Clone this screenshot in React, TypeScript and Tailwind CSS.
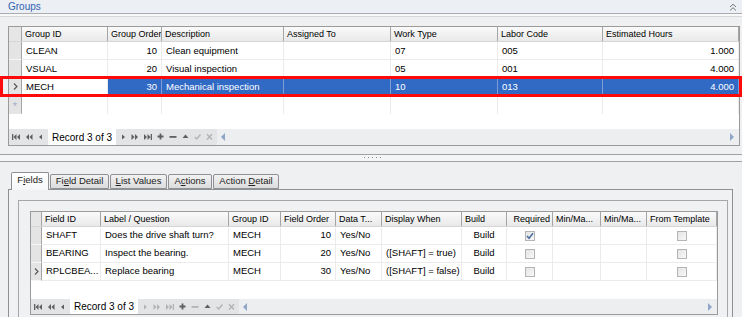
import React from "react";

type Col = { label: string; w: string; align?: "left" | "right" | "center" };

const topCols: Col[] = [
  { label: "Group ID", w: "w-[86px]" },
  { label: "Group Order", w: "w-[54px]", align: "right" },
  { label: "Description", w: "w-[122px]" },
  { label: "Assigned To", w: "w-[107px]" },
  { label: "Work Type", w: "w-[107px]" },
  { label: "Labor Code", w: "w-[105px]" },
  { label: "Estimated Hours", w: "flex-1", align: "right" },
];

const topRows = [
  ["CLEAN", "10", "Clean equipment", "", "07", "005", "1.000"],
  ["VSUAL", "20", "Visual inspection", "", "05", "001", "4.000"],
  ["MECH", "30", "Mechanical inspection", "", "10", "013", "4.000"],
];

const botCols: Col[] = [
  { label: "Field ID", w: "w-[59px]" },
  { label: "Label / Question", w: "w-[128px]" },
  { label: "Group ID", w: "w-[52px]" },
  { label: "Field Order", w: "w-[55px]", align: "right" },
  { label: "Data T...", w: "w-[46px]" },
  { label: "Display When", w: "w-[80px]" },
  { label: "Build", w: "w-[45px]", align: "center" },
  { label: "Required", w: "w-[46px]", align: "center" },
  { label: "Min/Ma...", w: "w-[48px]" },
  { label: "Min/Ma...", w: "w-[46px]" },
  { label: "From Template", w: "flex-1", align: "center" },
];

const botRows = [
  ["SHAFT", "Does the drive shaft turn?", "MECH", "10", "Yes/No", "", "Build", "x", "", "", "o"],
  ["BEARING", "Inspect the bearing.", "MECH", "20", "Yes/No", "([SHAFT] = true)", "Build", "o", "", "", "o"],
  ["RPLCBEA...", "Replace bearing", "MECH", "30", "Yes/No", "([SHAFT] = false)", "Build", "o", "", "", "o"],
];

function alignCls(a?: string) {
  if (a === "right") return "justify-end";
  if (a === "center") return "justify-center";
  return "justify-start";
}

function Check({ checked }: { checked: boolean }) {
  return (
    <div className="w-[10px] h-[10px] border border-[#b4b4b4] bg-linear-to-br from-[#e4e4e4] to-[#f8f8f8] flex items-center justify-center">
      {checked && (
        <svg width="8" height="8" viewBox="0 0 8 8">
          <path d="M1 4 L3 6.2 L7 1.2" fill="none" stroke="#4c6f9e" strokeWidth="1.6" />
        </svg>
      )}
    </div>
  );
}

function RowArrow() {
  return (
    <svg width="5" height="7" viewBox="0 0 5 7">
      <path d="M1 0.5 L4 3.5 L1 6.5" fill="none" stroke="#555" strokeWidth="1.1" />
    </svg>
  );
}

function NavIcon({ kind, dim }: { kind: string; dim?: boolean }) {
  const c = dim ? "#b3b3b3" : "#5f5f5f";
  let body: React.ReactNode = null;
  let w = 8;
  switch (kind) {
    case "first":
      body = (
        <>
          <rect x="0" y="1" width="1.3" height="6" fill={c} />
          <path d="M4.5 1 L1.5 4 L4.5 7 Z M8 1 L5 4 L8 7 Z" fill={c} />
        </>
      );
      break;
    case "prevp":
      body = <path d="M4 1 L1 4 L4 7 Z M7.5 1 L4.5 4 L7.5 7 Z" fill={c} />;
      break;
    case "prev":
      w = 5;
      body = <path d="M4 1.5 L1 4 L4 6.5 Z" fill={c} />;
      break;
    case "next":
      w = 5;
      body = <path d="M1 1.5 L4 4 L1 6.5 Z" fill={c} />;
      break;
    case "nextp":
      body = <path d="M0.5 1 L3.5 4 L0.5 7 Z M4 1 L7 4 L4 7 Z" fill={c} />;
      break;
    case "last":
      body = (
        <>
          <path d="M0 1 L3 4 L0 7 Z M3.5 1 L6.5 4 L3.5 7 Z" fill={c} />
          <rect x="6.7" y="1" width="1.3" height="6" fill={c} />
        </>
      );
      break;
    case "plus":
      w = 7;
      body = <path d="M2.6 0.5 H4.4 V2.6 H6.5 V4.4 H4.4 V6.5 H2.6 V4.4 H0.5 V2.6 H2.6 Z" fill={c} />;
      break;
    case "minus":
      body = <rect x="0.5" y="3" width="7" height="1.8" fill={c} />;
      break;
    case "up":
      w = 7;
      body = <path d="M3.5 1.5 L6.5 5 L0.5 5 Z" fill={c} />;
      break;
    case "check":
      w = 7;
      body = <path d="M0.7 4 L2.7 6 L6.5 1.5" fill="none" stroke={c} strokeWidth="1.4" />;
      break;
    case "x":
      w = 7;
      body = <path d="M1 1.2 L6 6.5 M6 1.2 L1 6.5" fill="none" stroke={c} strokeWidth="1.4" />;
      break;
  }
  return (
    <svg width={w} height="8" viewBox={`0 0 ${w} 8`}>
      {body}
    </svg>
  );
}

function ScrollArrow({ dir }: { dir: "l" | "r" }) {
  return (
    <svg width="4" height="8" viewBox="0 0 4 8">
      {dir === "l" ? (
        <path d="M4 0 L0 4 L4 8 Z" fill="#8fa6c8" />
      ) : (
        <path d="M0 0 L4 4 L0 8 Z" fill="#8fa6c8" />
      )}
    </svg>
  );
}

function Navigator({ lower }: { lower?: boolean }) {
  return (
    <div className={`flex items-center bg-[#eceef0] ${lower ? "h-[15px]" : "h-[16px]"}`}>
      <div className="flex items-center h-full bg-[#e3e4e6] pl-[3px] pr-[4px]">
        <div className="flex items-center gap-[5px]">
          <NavIcon kind="first" />
          <NavIcon kind="prevp" />
          <NavIcon kind="prev" />
        </div>
        <div className="bg-white h-full flex items-center px-[4px] ml-[5px] mr-[5px] text-[10px]">Record 3 of 3</div>
        <div className="flex items-center gap-[5px]">
          <NavIcon kind="next" dim={lower} />
          <NavIcon kind="nextp" dim={lower} />
          <NavIcon kind="last" dim={lower} />
          <NavIcon kind="plus" />
          <NavIcon kind="minus" dim={lower} />
          <NavIcon kind="up" />
          <NavIcon kind="check" dim />
          <NavIcon kind="x" dim />
        </div>
      </div>
      <div className="ml-[4px] flex items-center">
        <ScrollArrow dir="l" />
      </div>
      <div className="flex-1" />
      <div className="mr-[5px] flex items-center">
        <ScrollArrow dir="r" />
      </div>
    </div>
  );
}

function HeaderRow({ cols, selW }: { cols: Col[]; selW: string }) {
  return (
    <div className="flex h-[15px] border-b border-[#d5d5d5] bg-linear-to-b from-[#fafafa] to-[#e9e9e9] text-[9px]">
      <div className={`${selW} shrink-0 border-r border-[#a5a5a5] bg-[#e6e6e6]`} />
      {cols.map((c, i) => (
        <div
          key={i}
          className={`${c.w} shrink-0 border-r border-[#a5a5a5] flex items-center pl-[3px] pr-[2px] pt-[1px] overflow-hidden whitespace-nowrap ${
            c.label === "Required" ? "justify-end" : "justify-start"
          }`}
        >
          {c.label}
        </div>
      ))}
    </div>
  );
}

function SelCell({ w, children, last }: { w: string; children?: React.ReactNode; last?: boolean }) {
  return (
    <div
      className={`${w} shrink-0 border-r border-[#a5a5a5] bg-[#e4e4e4] border-b ${
        last ? "border-b-[#e4e4e4]" : "border-b-[#f6f6f6]"
      } flex items-center justify-center`}
    >
      {children}
    </div>
  );
}

function TopGrid() {
  return (
    <div className="w-[732px] h-[120px] border border-[#9a9a9a] bg-white flex flex-col">
      <HeaderRow cols={topCols} selW="w-[13px]" />
      {topRows.map((r, ri) => {
        const sel = ri === 2;
        return (
          <div key={ri} className="flex h-[18px] relative">
            <SelCell w="w-[13px]">{sel && <RowArrow />}</SelCell>
            {topCols.map((c, ci) => {
              const blue = sel && ci > 0;
              return (
                <div
                  key={ci}
                  className={`${c.w} shrink-0 flex items-center px-[4px] pt-[1px] whitespace-nowrap overflow-hidden ${alignCls(
                    c.align
                  )} ${
                    blue
                      ? "bg-[#316ac5] text-white border-r border-b border-[#7e9dd6]"
                      : "border-r border-b border-[#ebebeb]"
                  }`}
                >
                  {r[ci]}
                </div>
              );
            })}
            {sel && (
              <div className="absolute left-[-9px] right-[-3px] top-[-2px] bottom-[-1px] border-[3px] border-[#ff0a0a] pointer-events-none" />
            )}
          </div>
        );
      })}
      <div className="flex h-[18px]">
        <SelCell w="w-[13px]" last>
          <span className="text-[#9fb0c8] text-[11px] leading-none mt-[3px]">*</span>
        </SelCell>
        {topCols.map((c, ci) => (
          <div key={ci} className={`${c.w} shrink-0 border-r border-[#ebebeb]`} />
        ))}
      </div>
      <div className="flex-1" />
      <Navigator />
    </div>
  );
}

function BottomGrid() {
  return (
    <div className="w-[688px] h-[104px] border border-[#9a9a9a] bg-white flex flex-col">
      <HeaderRow cols={botCols} selW="w-[11px]" />
      {botRows.map((r, ri) => (
        <div key={ri} className="flex h-[18px]">
          <SelCell w="w-[11px]">{ri === 2 && <RowArrow />}</SelCell>
          {botCols.map((c, ci) => {
            const v = r[ci];
            let content: React.ReactNode = v;
            if (ci === 7 || ci === 10) content = <Check checked={v === "x"} />;
            return (
              <div
                key={ci}
                className={`${c.w} shrink-0 flex items-center px-[4px] whitespace-nowrap overflow-hidden border-r border-b border-[#ebebeb] ${alignCls(
                  c.align
                )}`}
              >
                {content}
              </div>
            );
          })}
        </div>
      ))}
      <div className="flex-1" />
      <Navigator lower />
    </div>
  );
}

function Tab({ label, selected, w }: { label: React.ReactNode; selected?: boolean; w: string }) {
  return (
    <div
      className={`${w} shrink-0 flex items-center justify-center border border-[#8f9094] rounded-t-[2px] text-[9.5px] text-[#222] ${
        selected
          ? "h-[18px] border-b-0 bg-linear-to-b from-[#ffffff] to-[#f6f7f8] relative z-10 -mb-px pb-[2px]"
          : "h-[15px] bg-linear-to-b from-[#f2f2f2] to-[#dcdcdc]"
      }`}
    >
      {label}
    </div>
  );
}

export default function App() {
  return (
    <div className="w-[742px] h-[317px] overflow-hidden bg-[#eff0f2] font-['Liberation_Sans',Arial,sans-serif] text-[9.5px] text-black">
      <div className="h-[14px] border-b border-[#a9acb1] bg-[#eceff3] flex items-center justify-between pl-[8px] pr-[5px]">
        <span className="text-[#2f63b3] text-[10px] leading-none">Groups</span>
        <svg width="8" height="8" viewBox="0 0 8 8">
          <path d="M1 4 L4 1.2 L7 4 M1 7.5 L4 4.7 L7 7.5" fill="none" stroke="#777" strokeWidth="1" />
        </svg>
      </div>
      <div className="h-[3px] bg-[#f8f8f8] border-b border-[#d8d8d8]" />
      <div className="pl-[8px] pt-[9px]">
        <TopGrid />
      </div>
      <div className="mt-[8px] h-[8px] border-t border-b border-[#9fa1a4] bg-[#f4f5f6] flex items-center justify-center">
        <div className="flex gap-[3px] ml-[3px] mt-[-2px]">
          <div className="w-px h-px bg-[#8a8a8a]" />
          <div className="w-px h-px bg-[#8a8a8a]" />
          <div className="w-px h-px bg-[#8a8a8a]" />
          <div className="w-px h-px bg-[#8a8a8a]" />
          <div className="w-px h-px bg-[#8a8a8a]" />
        </div>
      </div>
      <div className="ml-[8px] w-[725px] mt-[10px]">
        <div className="flex items-end h-[17px] pl-[3px] gap-[1px]">
          <Tab
            selected
            w="w-[38px]"
            label={
              <span>
                F<u>i</u>elds
              </span>
            }
          />
          <Tab
            w="w-[59px]"
            label={
              <span>
                Fi<u>e</u>ld Detail
              </span>
            }
          />
          <Tab
            w="w-[57px]"
            label={
              <span>
                <u>L</u>ist Values
              </span>
            }
          />
          <Tab
            w="w-[44px]"
            label={
              <span>
                A<u>c</u>tions
              </span>
            }
          />
          <Tab
            w="w-[66px]"
            label={
              <span>
                Action <u>D</u>etail
              </span>
            }
          />
        </div>
        <div className="h-[140px] border border-[#8f9094] border-b-0 bg-[#f0f1f3] pt-[10px] pl-[9px]">
          <div className="w-[710px] h-[130px] border-l border-t border-r border-[#a5a7aa] pt-[10px] pl-[11px]">
            <BottomGrid />
          </div>
        </div>
      </div>
    </div>
  );
}
